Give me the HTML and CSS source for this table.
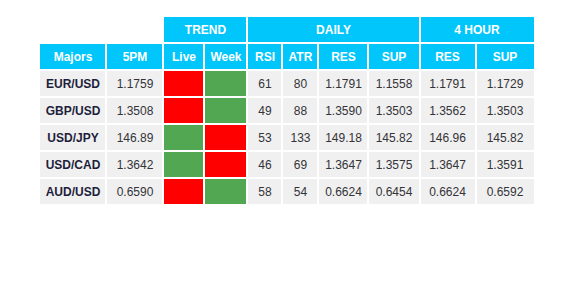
FILE: index.html
```html
<!DOCTYPE html>
<html>
<head>
<meta charset="utf-8">
<link rel="stylesheet" href="styles.css">
</head>
<body>
<table class="fx">
  <colgroup>
    <col class="c-maj"><col class="c-5pm"><col class="c-live"><col class="c-week">
    <col class="c-rsi"><col class="c-atr"><col class="c-dres"><col class="c-dsup">
    <col class="c-hres"><col class="c-hsup">
  </colgroup>
  <thead>
    <tr>
      <th class="blank" colspan="2"></th>
      <th colspan="2">TREND</th>
      <th colspan="4">DAILY</th>
      <th colspan="2">4 HOUR</th>
    </tr>
    <tr>
      <th>Majors</th><th>5PM</th><th>Live</th><th>Week</th>
      <th>RSI</th><th>ATR</th><th>RES</th><th>SUP</th><th>RES</th><th>SUP</th>
    </tr>
  </thead>
  <tbody>
    <tr><td class="pair">EUR/USD</td><td>1.1759</td><td class="dn"></td><td class="up"></td><td>61</td><td>80</td><td>1.1791</td><td>1.1558</td><td>1.1791</td><td>1.1729</td></tr>
    <tr><td class="pair">GBP/USD</td><td>1.3508</td><td class="dn"></td><td class="up"></td><td>49</td><td>88</td><td>1.3590</td><td>1.3503</td><td>1.3562</td><td>1.3503</td></tr>
    <tr><td class="pair">USD/JPY</td><td>146.89</td><td class="up"></td><td class="dn"></td><td>53</td><td>133</td><td>149.18</td><td>145.82</td><td>146.96</td><td>145.82</td></tr>
    <tr><td class="pair">USD/CAD</td><td>1.3642</td><td class="up"></td><td class="dn"></td><td>46</td><td>69</td><td>1.3647</td><td>1.3575</td><td>1.3647</td><td>1.3591</td></tr>
    <tr><td class="pair">AUD/USD</td><td>0.6590</td><td class="dn"></td><td class="up"></td><td>58</td><td>54</td><td>0.6624</td><td>0.6454</td><td>0.6624</td><td>0.6592</td></tr>
  </tbody>
</table>
</body>
</html>
```
FILE: styles.css
```css
html, body {
  margin: 0;
  padding: 0;
  background: #ffffff;
}
body {
  padding-top: 15px;
  font-family: "Liberation Sans", Arial, sans-serif;
}
.fx {
  margin: 0 auto;
  border-collapse: separate;
  border-spacing: 2px;
  table-layout: fixed;
  width: 497px;
  font-size: 12px;
}
.c-maj { width: 65px; }
.c-5pm { width: 55px; }
.c-live { width: 39px; }
.c-week { width: 41px; }
.c-rsi { width: 33px; }
.c-atr { width: 34px; }
.c-dres { width: 48px; }
.c-dsup { width: 49px; }
.c-hres { width: 54px; }
.c-hsup { width: 57px; }
.fx th, .fx td {
  height: 25px;
  padding: 0;
  text-align: center;
  vertical-align: middle;
  box-sizing: border-box;
  white-space: nowrap;
}
.fx th {
  background: #00c6fc;
  color: #ffffff;
  font-weight: bold;
}
.fx th.blank {
  background: transparent;
}
.fx td {
  background: #f0f0f0;
  color: #333338;
}
.fx td.pair {
  font-weight: bold;
  color: #1e1e3c;
}
.fx td.dn { background: #ff0000; }
.fx td.up { background: #52a852; }
```
